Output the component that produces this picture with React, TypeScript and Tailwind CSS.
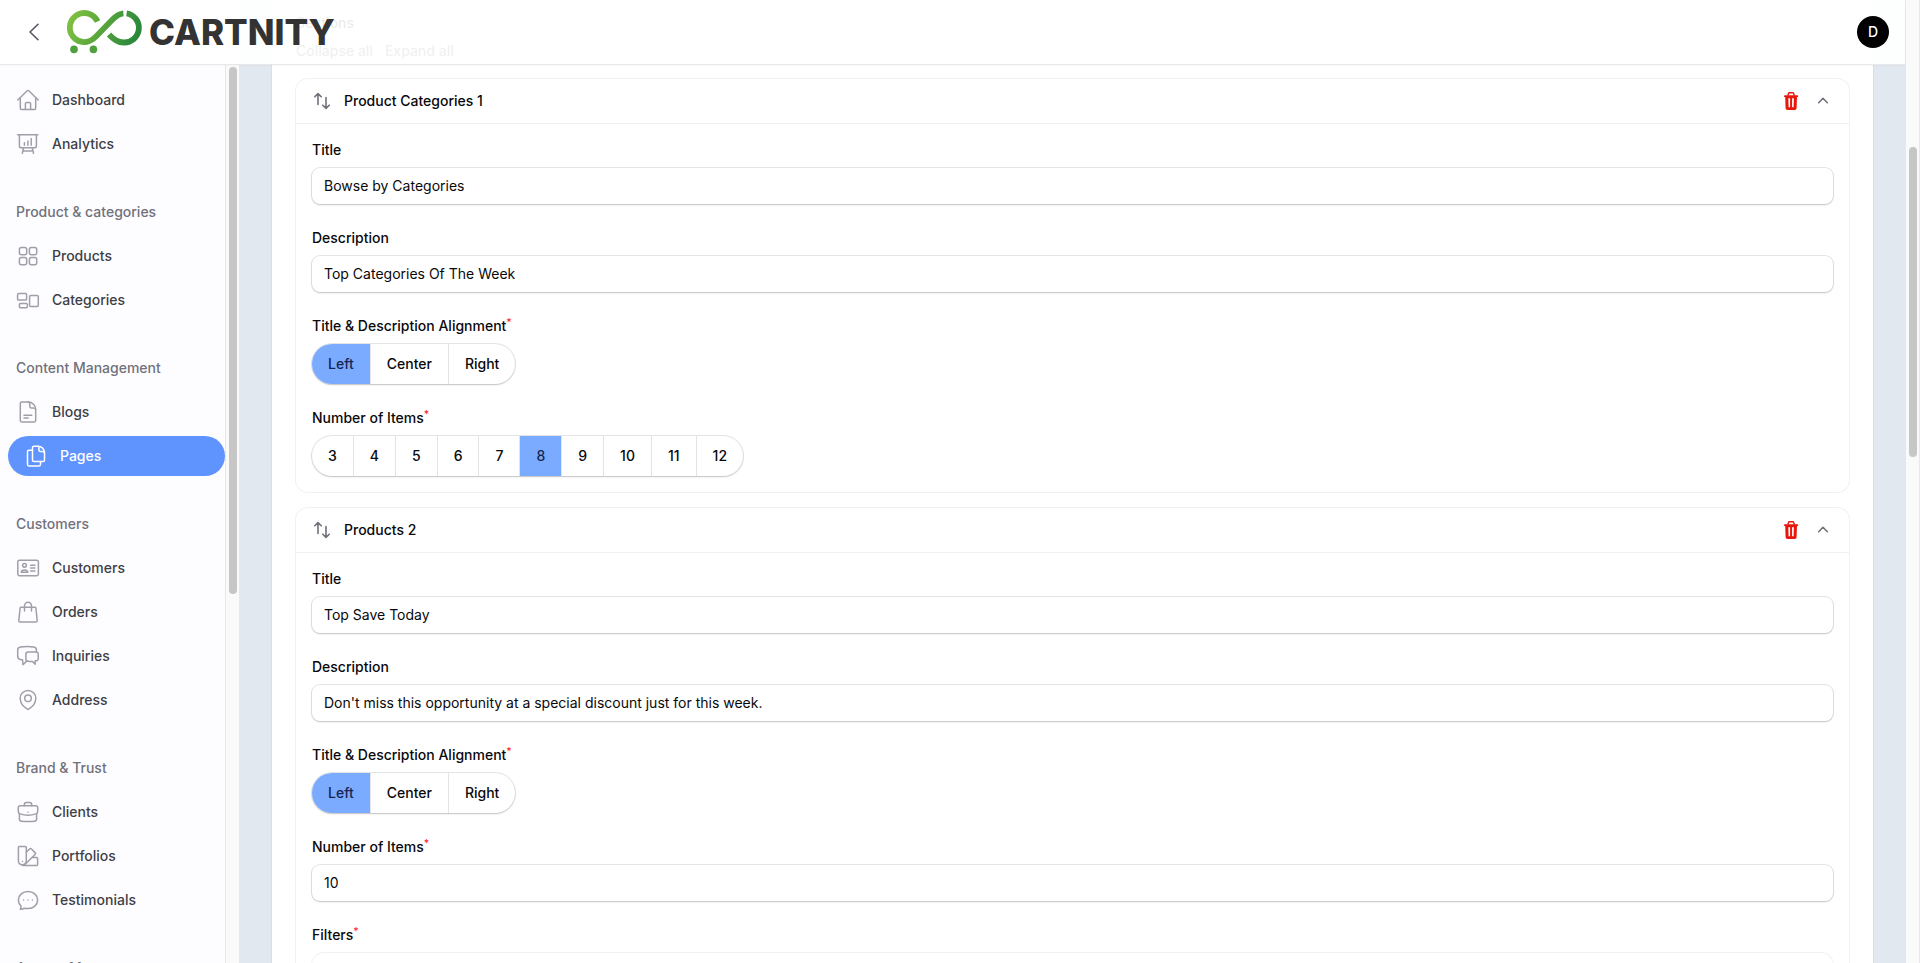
import React from "react";

type IconName =
  | "home" | "chart" | "grid" | "blocks" | "doc" | "docs" | "idcard"
  | "bag" | "chat" | "pin" | "briefcase" | "swatch" | "comment";

const icons: Record<IconName, React.ReactNode> = {
  home: (
    <>
      <path d="M1.8 12 11.200 2.800c.5-.5 1.100-.5 1.600 0L22.200 12" />
      <path d="M4.300 10v10.200c0 .7.500 1.200 1.200 1.200h13c.7 0 1.200-.5 1.200-1.200V10" />
      <path d="M9.400 21.200v-5.400c0-.8.6-1.400 1.400-1.400h2.400c.8 0 1.400.6 1.400 1.400v5.400" />
    </>
  ),
  chart: (
    <>
      <path d="M1.600 2.700h20.200M3.400 2.700v11c0 1.200.9 2.100 2.100 2.100h12.800c1.200 0 2.100-.9 2.100-2.100v-11" />
      <path d="M7.500 16l-1.200 5.300M16.300 16l1.200 5.300M6.800 19h10.200M8.400 10.800v2.400M11.900 9v4.200M15.200 6.500v6.700" />
    </>
  ),
  grid: (
    <>
      <rect x="3.400" y="3.400" width="7.300" height="7.300" rx="2" />
      <rect x="13.400" y="3.400" width="7.300" height="7.300" rx="2" />
      <rect x="3.400" y="13.400" width="7.300" height="7.300" rx="2" />
      <rect x="13.400" y="13.400" width="7.300" height="7.300" rx="2" />
    </>
  ),
  blocks: (
    <>
      <rect x="1.600" y="5.500" width="9" height="6.600" rx="1.200" />
      <rect x="3.400" y="15.400" width="8" height="4.300" rx="1.100" />
      <rect x="13.600" y="7.400" width="8.700" height="11" rx="1.200" />
    </>
  ),
  doc: (
    <>
      <path d="M12.300 2H5.700C4.900 2 4.300 2.600 4.300 3.400v17.200c0 .8.6 1.400 1.400 1.400h12.600c.8 0 1.400-.6 1.400-1.400V9.400C19.700 5.300 16.400 2 12.300 2" />
      <path d="M12.300 2c1 .3 1.500 1.200 1.500 2.300v2.300c0 .8.600 1.300 1.300 1.300h2.200c1.200 0 2.100.5 2.400 1.500M8 15.300h7.800M8 18h4.200" />
    </>
  ),
  docs: (
    <>
      <path d="M14 2.200H9.900c-.8 0-1.400.6-1.400 1.400v12.600c0 .8.6 1.400 1.400 1.400h9.200c.8 0 1.400-.6 1.400-1.400V8.700C20.500 5.100 17.600 2.200 14 2.200" />
      <path d="M14 2.200c.6.300.9.900.9 1.700v2.200c0 .7.500 1.300 1.200 1.300h2.300c1 0 1.800.4 2.100 1.300M8.500 6.200H4.900c-.8 0-1.400.6-1.400 1.400v13c0 .8.6 1.400 1.400 1.400h10.200c.8 0 1.400-.6 1.400-1.400v-3" />
    </>
  ),
  idcard: (
    <>
      <rect x="1.800" y="4.200" width="20.600" height="15.600" rx="1.700" />
      <circle cx="8.500" cy="9.300" r="1.900" />
      <path d="M5.300 16.300c0-1.300 1.500-2.400 3.200-2.400s3.300 1.100 3.300 2.400zM14.600 9.300h4.300M14.600 12h4.300M14.600 14.900h4.300" />
    </>
  ),
  bag: (
    <>
      <path d="M4.900 7.300h14.200c.4 0 .7.300.8.700l1.300 12.700c.1.700-.4 1.300-1.200 1.300H4c-.8 0-1.300-.6-1.200-1.300L4.100 8c.1-.4.400-.7.800-.7z" />
      <path d="M8.500 11V5.700a3.500 3.500 0 0 1 7 0V11" />
    </>
  ),
  chat: (
    <>
      <path d="M20.400 7.800V6c0-1.500-1-2.700-2.500-3a38 38 0 0 0-13.500 0C2.800 3.300 1.700 4.600 1.700 6v6.300c0 1.700 1.300 2.900 2.900 3.200l1.900.2.500 5 3.600-3.600" />
      <path d="M12 7.900h8a2.200 2.200 0 0 1 2.200 2.200V14.600a2.200 2.200 0 0 1-2.200 2.200h-.8v3.500l-2.600-2.800c-1.700 0-3.100 0-4.600-.2a2.200 2.200 0 0 1-2.100-2.200v-5A2.200 2.200 0 0 1 12 7.900z" />
    </>
  ),
  pin: (
    <>
      <circle cx="12" cy="10.300" r="3.300" />
      <path d="M19.800 10.300c0 6.600-6.300 10.400-7.200 10.900-.4.300-.8.300-1.200 0-.9-.5-7.200-4.300-7.200-10.900a7.800 7.800 0 0 1 15.600 0z" />
    </>
  ),
  briefcase: (
    <>
      <path d="M4.400 5.800h15.200c1.200 0 2.100.9 2.100 2v3.700c0 1.100-.7 2-1.800 2.400a25 25 0 0 1-15.800 0c-1.100-.4-1.800-1.300-1.800-2.400V7.800c0-1.100.9-2 2.100-2z" />
      <path d="M3.400 13.700v5.400c0 1.200.9 2.100 2 2.200 4.400.4 8.800.4 13.200 0 1.100-.1 2-1 2-2.200v-5.400M8.300 5.700V4.600c0-1.200.8-2 2-2.100h3.400c1.200.1 2 .9 2 2.100v1.100M12 12.300h.01" />
    </>
  ),
  swatch: (
    <>
      <path d="M3.400 2.500h5.900c.6 0 1 .4 1 1v13.800a4 4 0 0 1-7.900 0V3.500c0-.6.400-1 1-1z" />
      <path d="M10.300 8.200l3.500-3.400c.4-.4 1-.4 1.400 0l4.100 4.100c.4.400.4 1 0 1.400L9.200 20.300M6.400 21.400h14.200c.6 0 1-.4 1-1v-6c0-.6-.4-1-1-1h-4.300M6.400 17.500h.01" />
    </>
  ),
  comment: (
    <path d="M12 20.600c5.400 0 9.600-3.700 9.600-8.600S17.400 3.400 12 3.400 2.400 7.100 2.400 12c0 2.400 1 4.500 2.600 6 .2 1.300-.1 2.400-.7 3.300 1.500.2 2.800-.1 4-1.100 1.100.3 2.400.4 3.700.4zM7.600 12h.01M12 12h.01M16.400 12h.01" />
  ),
};

function Icon({ name, active }: { name: IconName; active?: boolean }) {
  return (
    <svg
      viewBox="0 0 24 24"
      aria-hidden="true"
      className={`size-6 shrink-0 ${active ? "text-white" : "text-[#9f9fa9]"}`}
      fill="none"
      stroke="currentColor"
      strokeWidth="1.500"
      strokeLinecap="round"
      strokeLinejoin="round"
    >
      {icons[name]}
    </svg>
  );
}

const groups: { title?: string; items: { label: string; icon: IconName; active?: boolean }[] }[] = [
  { items: [{ label: "Dashboard", icon: "home" }, { label: "Analytics", icon: "chart" }] },
  {
    title: "Product & categories",
    items: [{ label: "Products", icon: "grid" }, { label: "Categories", icon: "blocks" }],
  },
  {
    title: "Content Management",
    items: [{ label: "Blogs", icon: "doc" }, { label: "Pages", icon: "docs", active: true }],
  },
  {
    title: "Customers",
    items: [
      { label: "Customers", icon: "idcard" },
      { label: "Orders", icon: "bag" },
      { label: "Inquiries", icon: "chat" },
      { label: "Address", icon: "pin" },
    ],
  },
  {
    title: "Brand & Trust",
    items: [
      { label: "Clients", icon: "briefcase" },
      { label: "Portfolios", icon: "swatch" },
      { label: "Testimonials", icon: "comment" },
    ],
  },
  { title: "Access Management", items: [] },
];

function Sidebar() {
  return (
    <nav className="flex w-[225px] shrink-0 flex-col gap-7 overflow-hidden bg-[#fdfdff] pt-20">
      {groups.map((g, i) => (
        <div key={i} className="flex flex-col gap-1">
          {g.title && <h2 className="flex h-10 items-center px-4 font-medium text-[#71717b]">{g.title}</h2>}
          {g.items.map((it) => (
            <a
              key={it.label}
              href="#"
              className={`flex h-10 items-center gap-3 px-4 font-medium ${
                it.active ? "ml-2 rounded-full bg-[#5f94ff] text-white" : "text-[#3f3f46]"
              }`}
            >
              <Icon name={it.icon} active={it.active} />
              {it.label}
            </a>
          ))}
        </div>
      ))}
    </nav>
  );
}

function Logo() {
  return (
    <div className="flex items-center gap-1.5">
      <svg viewBox="66 8 78 48" className="h-12 w-[78px]" fill="none" aria-hidden="true">
        <defs>
          <linearGradient id="mark" x1="68" y1="10" x2="142" y2="40" gradientUnits="userSpaceOnUse">
            <stop offset="0" stopColor="#86c440" />
            <stop offset="0.5" stopColor="#56a43c" />
            <stop offset="1" stopColor="#23843b" />
          </linearGradient>
        </defs>
        <g stroke="url(#mark)" strokeWidth="5.800">
          <path d="M98.600 21.400A14.600 14.600 0 1 0 84.600 42.200C90 42.200 93.500 40 97 36.500L113.500 19.500C117.500 15.400 121 13.600 124.500 13.300" />
          <path d="M127.500 13.300A14.700 14.700 0 0 1 124.500 42.500C118.500 42.500 114.500 39.500 110 34.500" />
        </g>
        <circle cx="75" cy="49.400" r="3.800" fill="#4f9f3c" />
        <circle cx="94.400" cy="49.400" r="3.800" fill="#4f9f3c" />
        <path d="M126 9v8" stroke="#fdfdff" strokeWidth="2.400" />
      </svg>
      <span className="text-[35px] leading-none font-extrabold text-[#333333]">CARTNITY</span>
    </div>
  );
}

function Header() {
  return (
    <header className="absolute inset-x-0 top-0 z-10 flex h-16 items-center justify-between bg-white/92 px-4 shadow-[0_1px_0_0_#e8e8eb,0_2px_2px_0_rgba(0,0,0,0.03)]">
      <div className="flex items-center gap-[13px]">
        <button type="button" aria-label="Back" className="flex size-9 items-center justify-center text-[#52525c]">
          <svg viewBox="0 0 24 24" className="size-6" fill="none" stroke="currentColor" strokeWidth="1.500" strokeLinecap="round" strokeLinejoin="round">
            <path d="M16 4.200 8 12l8 7.800" />
          </svg>
        </button>
        <Logo />
      </div>
      <button type="button" aria-label="Account" className="flex size-8 items-center justify-center rounded-full bg-black font-medium text-white">
        D
      </button>
    </header>
  );
}

function Star() {
  return <sup className="font-medium text-[#fb2c36]">*</sup>;
}

function TextField({ id, label, value, required }: { id: string; label: string; value: string; required?: boolean }) {
  return (
    <div className="flex flex-col gap-2">
      <label htmlFor={id} className="h-5 font-medium text-[#09090b]">
        {label}
        {required && <Star />}
      </label>
      <input
        id={id}
        type="text"
        defaultValue={value}
        className="h-9 w-full rounded-lg bg-white px-3 pb-0.5 text-[#09090b] shadow-[0_0_0_1px_rgba(9,9,11,0.1),0_1px_2px_0_rgba(0,0,0,0.15)] outline-none"
      />
    </div>
  );
}

function ToggleField({ name, label, options, value }: { name: string; label: string; options: string[]; value: string }) {
  return (
    <fieldset className="flex flex-col items-start">
      <legend className="mb-2 h-5 font-medium text-[#09090b]">
        {label}
        <Star />
      </legend>
      <div className="flex divide-x divide-[#e4e4e7] overflow-hidden rounded-full bg-white shadow-[0_0_0_1px_rgba(9,9,11,0.1),0_1px_2px_0_rgba(0,0,0,0.15)]">
        {options.map((o) => (
          <label
            key={o}
            className="flex h-10 cursor-pointer items-center px-4 font-medium text-[#09090b] has-checked:bg-[#7aabff] has-checked:text-[#162456]"
          >
            <input type="radio" name={name} value={o} defaultChecked={o === value} className="sr-only" />
            {o}
          </label>
        ))}
      </div>
    </fieldset>
  );
}

function Section({ title, children }: { title: string; children: React.ReactNode }) {
  return (
    <section className="rounded-xl bg-white ring-1 ring-[#f1f1f3]">
      <div className="flex items-center border-b border-[#f1f1f3] px-4">
        <button type="button" aria-label="Reorder" className="flex h-11 w-5 items-center justify-center text-[#71717b]">
          <svg viewBox="0 0 20 20" className="size-5" fill="none" stroke="currentColor" strokeWidth="1.600" strokeLinecap="round" strokeLinejoin="round">
            <path d="M6 13.500V2.800M2.800 5.800 6 2.600l3.200 3.200M14 6.500v10.700M10.800 14.200l3.200 3.200 3.200-3.200" />
          </svg>
        </button>
        <h3 className="ml-3 flex-1 font-medium text-[#09090b]">{title}</h3>
        <button type="button" aria-label="Delete" className="flex size-5 items-center justify-center text-[#e7180b]">
          <svg viewBox="0 0 20 20" className="size-5" fill="none" aria-hidden="true">
            <path d="M6.900 4.600 7.600 2.300c.1-.4.400-.6.800-.6h3.400c.4 0 .7.200.8.600l.7 2.300" stroke="currentColor" strokeWidth="1.500" />
            <path d="M3.900 5.200h12.400" stroke="currentColor" strokeWidth="1.800" strokeLinecap="round" />
            <path
              fill="currentColor"
              fillRule="evenodd"
              d="M4.200 5.500h11.800l-.4 11.500c-.1 1.200-.8 2-2 2H6.600c-1.200 0-1.900-.8-2-2zM7.300 7.300l.3 9h1.500v-9zM11.100 7.300v9h1.500l.3-9z"
            />
          </svg>
        </button>
        <button type="button" aria-label="Collapse" className="ml-3 flex size-5 items-center justify-center text-[#71717b]">
          <svg viewBox="0 0 20 20" className="size-5" fill="none" stroke="currentColor" strokeWidth="1.600" strokeLinecap="round" strokeLinejoin="round">
            <path d="M5.700 11.700 10 7.300l4.300 4.400" />
          </svg>
        </button>
      </div>
      <div className="flex flex-col gap-6 p-4">{children}</div>
    </section>
  );
}

const alignments = ["Left", "Center", "Right"];
const counts = ["3", "4", "5", "6", "7", "8", "9", "10", "11", "12"];

export default function App() {
  return (
    <div className="flex h-screen overflow-hidden bg-white font-['Inter',sans-serif] text-sm">
      <div className="relative flex min-w-0 flex-1">
        <Header />
        <Sidebar />
        <div className="flex w-[15px] shrink-0 flex-col border-x border-[#e8e8e8] bg-[#fafafa] px-[3px] pt-[67px]" aria-hidden="true">
          <div className="h-[527px] w-2 rounded-full bg-[#c6c6c6]" />
        </div>
        <main className="min-w-0 flex-1 overflow-hidden bg-[#e1e8f0] px-8">
          <div className="bg-white px-6 pt-[13px] pb-6 ring-1 ring-[#d8dee9]">
            <h2 className="font-medium text-[#09090b]">Sections</h2>
            <div className="mt-2 mb-[18px] flex gap-3 font-medium text-[#3f3f46]">
              <button type="button">Collapse all</button>
              <button type="button">Expand all</button>
            </div>
            <div className="flex flex-col gap-4">
              <Section title="Product Categories 1">
                <TextField id="cat-title" label="Title" value="Bowse by Categories" />
                <TextField id="cat-desc" label="Description" value="Top Categories Of The Week" />
                <ToggleField name="cat-align" label="Title & Description Alignment" options={alignments} value="Left" />
                <ToggleField name="cat-count" label="Number of Items" options={counts} value="8" />
              </Section>
              <Section title="Products 2">
                <TextField id="prod-title" label="Title" value="Top Save Today" />
                <TextField id="prod-desc" label="Description" value="Don't miss this opportunity at a special discount just for this week." />
                <ToggleField name="prod-align" label="Title & Description Alignment" options={alignments} value="Left" />
                <TextField id="prod-count" label="Number of Items" value="10" required />
                <fieldset>
                  <legend className="mb-2 h-5 font-medium text-[#09090b]">
                    Filters
                    <Star />
                  </legend>
                  <div className="h-24 rounded-xl bg-white ring-1 ring-[#f1f1f3]" />
                </fieldset>
              </Section>
            </div>
          </div>
        </main>
      </div>
      <div className="flex w-[15px] shrink-0 flex-col border-x border-[#e8e8e8] bg-[#fafafa] px-[3px] pt-[147px]" aria-hidden="true">
        <div className="h-[310px] w-2 rounded-full bg-[#c6c6c6]" />
      </div>
    </div>
  );
}
